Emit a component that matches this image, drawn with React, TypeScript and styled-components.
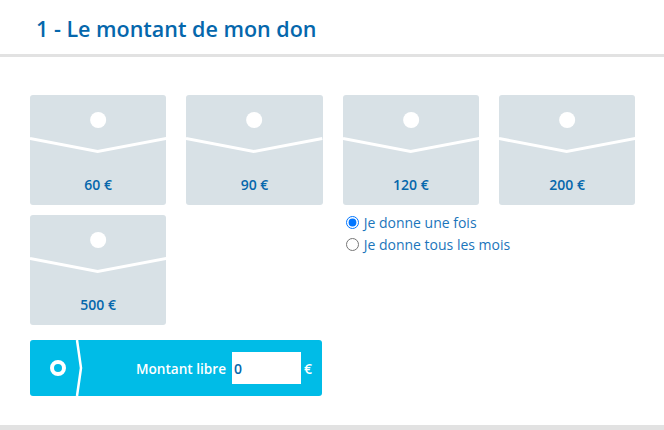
import React, { useState } from "react";
import styled, { createGlobalStyle } from "styled-components";

const GlobalStyle = createGlobalStyle`
  html, body {
    margin: 0;
    padding: 0;
    background: #fff;
    font-family: "Open Sans", "Liberation Sans", sans-serif;
  }
`;
const Wrapper = styled.div`
  width: 664px;
  height: 430px;
  overflow: hidden;
  display: flex;
  flex-direction: column;
`;
const Header = styled.header`
  height: 54px;
  border-bottom: 3px solid #e2e2e2;
  padding-left: 36px;
  display: flex;
  align-items: center;
`;
const Title = styled.h2`
  margin: 3px 0 0;
  font-size: 21.5px;
  font-weight: 600;
  color: #0567ac;
`;
const Amounts = styled.div`
  display: grid;
  grid-template-columns: repeat(4, 136.33px);
  grid-template-rows: 110px 110px 56px;
  column-gap: 20px;
  row-gap: 10px;
  padding: 38px 0 0 30px;
`;
const Card = styled.button`
  padding: 0;
  border: 0;
  border-radius: 3px;
  background: #d8e1e6;
  display: flex;
  flex-direction: column;
  align-items: center;
  font-family: inherit;
  overflow: hidden;
  cursor: pointer;
`;
const Flap = styled.svg`
  display: block;
  width: 100%;
  height: 62px;
  flex-shrink: 0;
`;
const CardLabel = styled.span`
  margin-top: 19px;
  font-size: 14px;
  line-height: 18px;
  font-weight: 600;
  color: #0567ac;
`;
const Frequency = styled.div`
  grid-column: 3 / span 2;
  display: flex;
  flex-direction: column;
  gap: 4px;
  margin-top: -2px;
`;
const RadioRow = styled.label`
  display: flex;
  align-items: center;
  height: 18px;
  font-size: 14px;
  color: #1b75bb;
  cursor: pointer;
`;
const Radio = styled.input`
  width: 13px;
  height: 13px;
  margin: 0 5px 0 3px;
`;
const Free = styled.div`
  grid-column: 1 / span 2;
  margin-top: 5px;
  height: 56px;
  width: 292px;
  border-radius: 3px;
  background: #00bce7;
  display: flex;
  align-items: center;
  color: #fff;
`;
const FreeFlap = styled.svg`
  display: block;
  width: 60px;
  height: 56px;
  flex-shrink: 0;
`;
const FreeLabel = styled.span`
  margin-left: auto;
  font-size: 13.6px;
  font-weight: 600;
`;
const FreeInput = styled.input`
  width: 69px;
  height: 32px;
  box-sizing: border-box;
  margin: 0 3px 0 6px;
  padding: 0 2px;
  border: 0;
  outline: 0;
  background: #fff;
  font-family: inherit;
  font-size: 14px;
  font-weight: 600;
  color: #0567ac;
`;
const Currency = styled.span`
  margin-right: 10px;
  font-size: 14px;
  font-weight: 600;
`;
const BottomBand = styled.div`
  margin-top: auto;
  height: 5px;
  background: #e2e2e2;
`;

const AMOUNTS_TOP = [60, 90, 120, 200];

function AmountCard({ value }: { value: number }) {
  return (
    <Card type="button">
      <Flap viewBox="0 0 136 62" preserveAspectRatio="none">
        <circle cx="68" cy="25" r="8" fill="#fff" />
        <path d="M0 43.5 L67.5 56.5 L136 43.5" fill="none" stroke="#fff" strokeWidth="3" />
      </Flap>
      <CardLabel>{value} €</CardLabel>
    </Card>
  );
}

function App() {
  const [monthly, setMonthly] = useState(false);
  const [free, setFree] = useState("0");
  return (
    <Wrapper>
      <GlobalStyle />
      <Header>
        <Title>1 - Le montant de mon don</Title>
      </Header>
      <Amounts>
        {AMOUNTS_TOP.map((value) => (
          <AmountCard key={value} value={value} />
        ))}
        <AmountCard value={500} />
        <div />
        <Frequency>
          <RadioRow>
            <Radio type="radio" name="frequency" checked={!monthly} onChange={() => setMonthly(false)} />
            Je donne une fois
          </RadioRow>
          <RadioRow>
            <Radio type="radio" name="frequency" checked={monthly} onChange={() => setMonthly(true)} />
            Je donne tous les mois
          </RadioRow>
        </Frequency>
        <Free>
          <FreeFlap viewBox="0 0 60 56">
            <circle cx="28" cy="28" r="6" fill="none" stroke="#fff" strokeWidth="4" />
            <path d="M47 0 L51 28 L47 56" fill="none" stroke="#fff" strokeWidth="2.5" />
          </FreeFlap>
          <FreeLabel>Montant libre</FreeLabel>
          <FreeInput value={free} onChange={(e) => setFree(e.target.value)} />
          <Currency>€</Currency>
        </Free>
      </Amounts>
      <BottomBand />
    </Wrapper>
  );
}

export default App;
